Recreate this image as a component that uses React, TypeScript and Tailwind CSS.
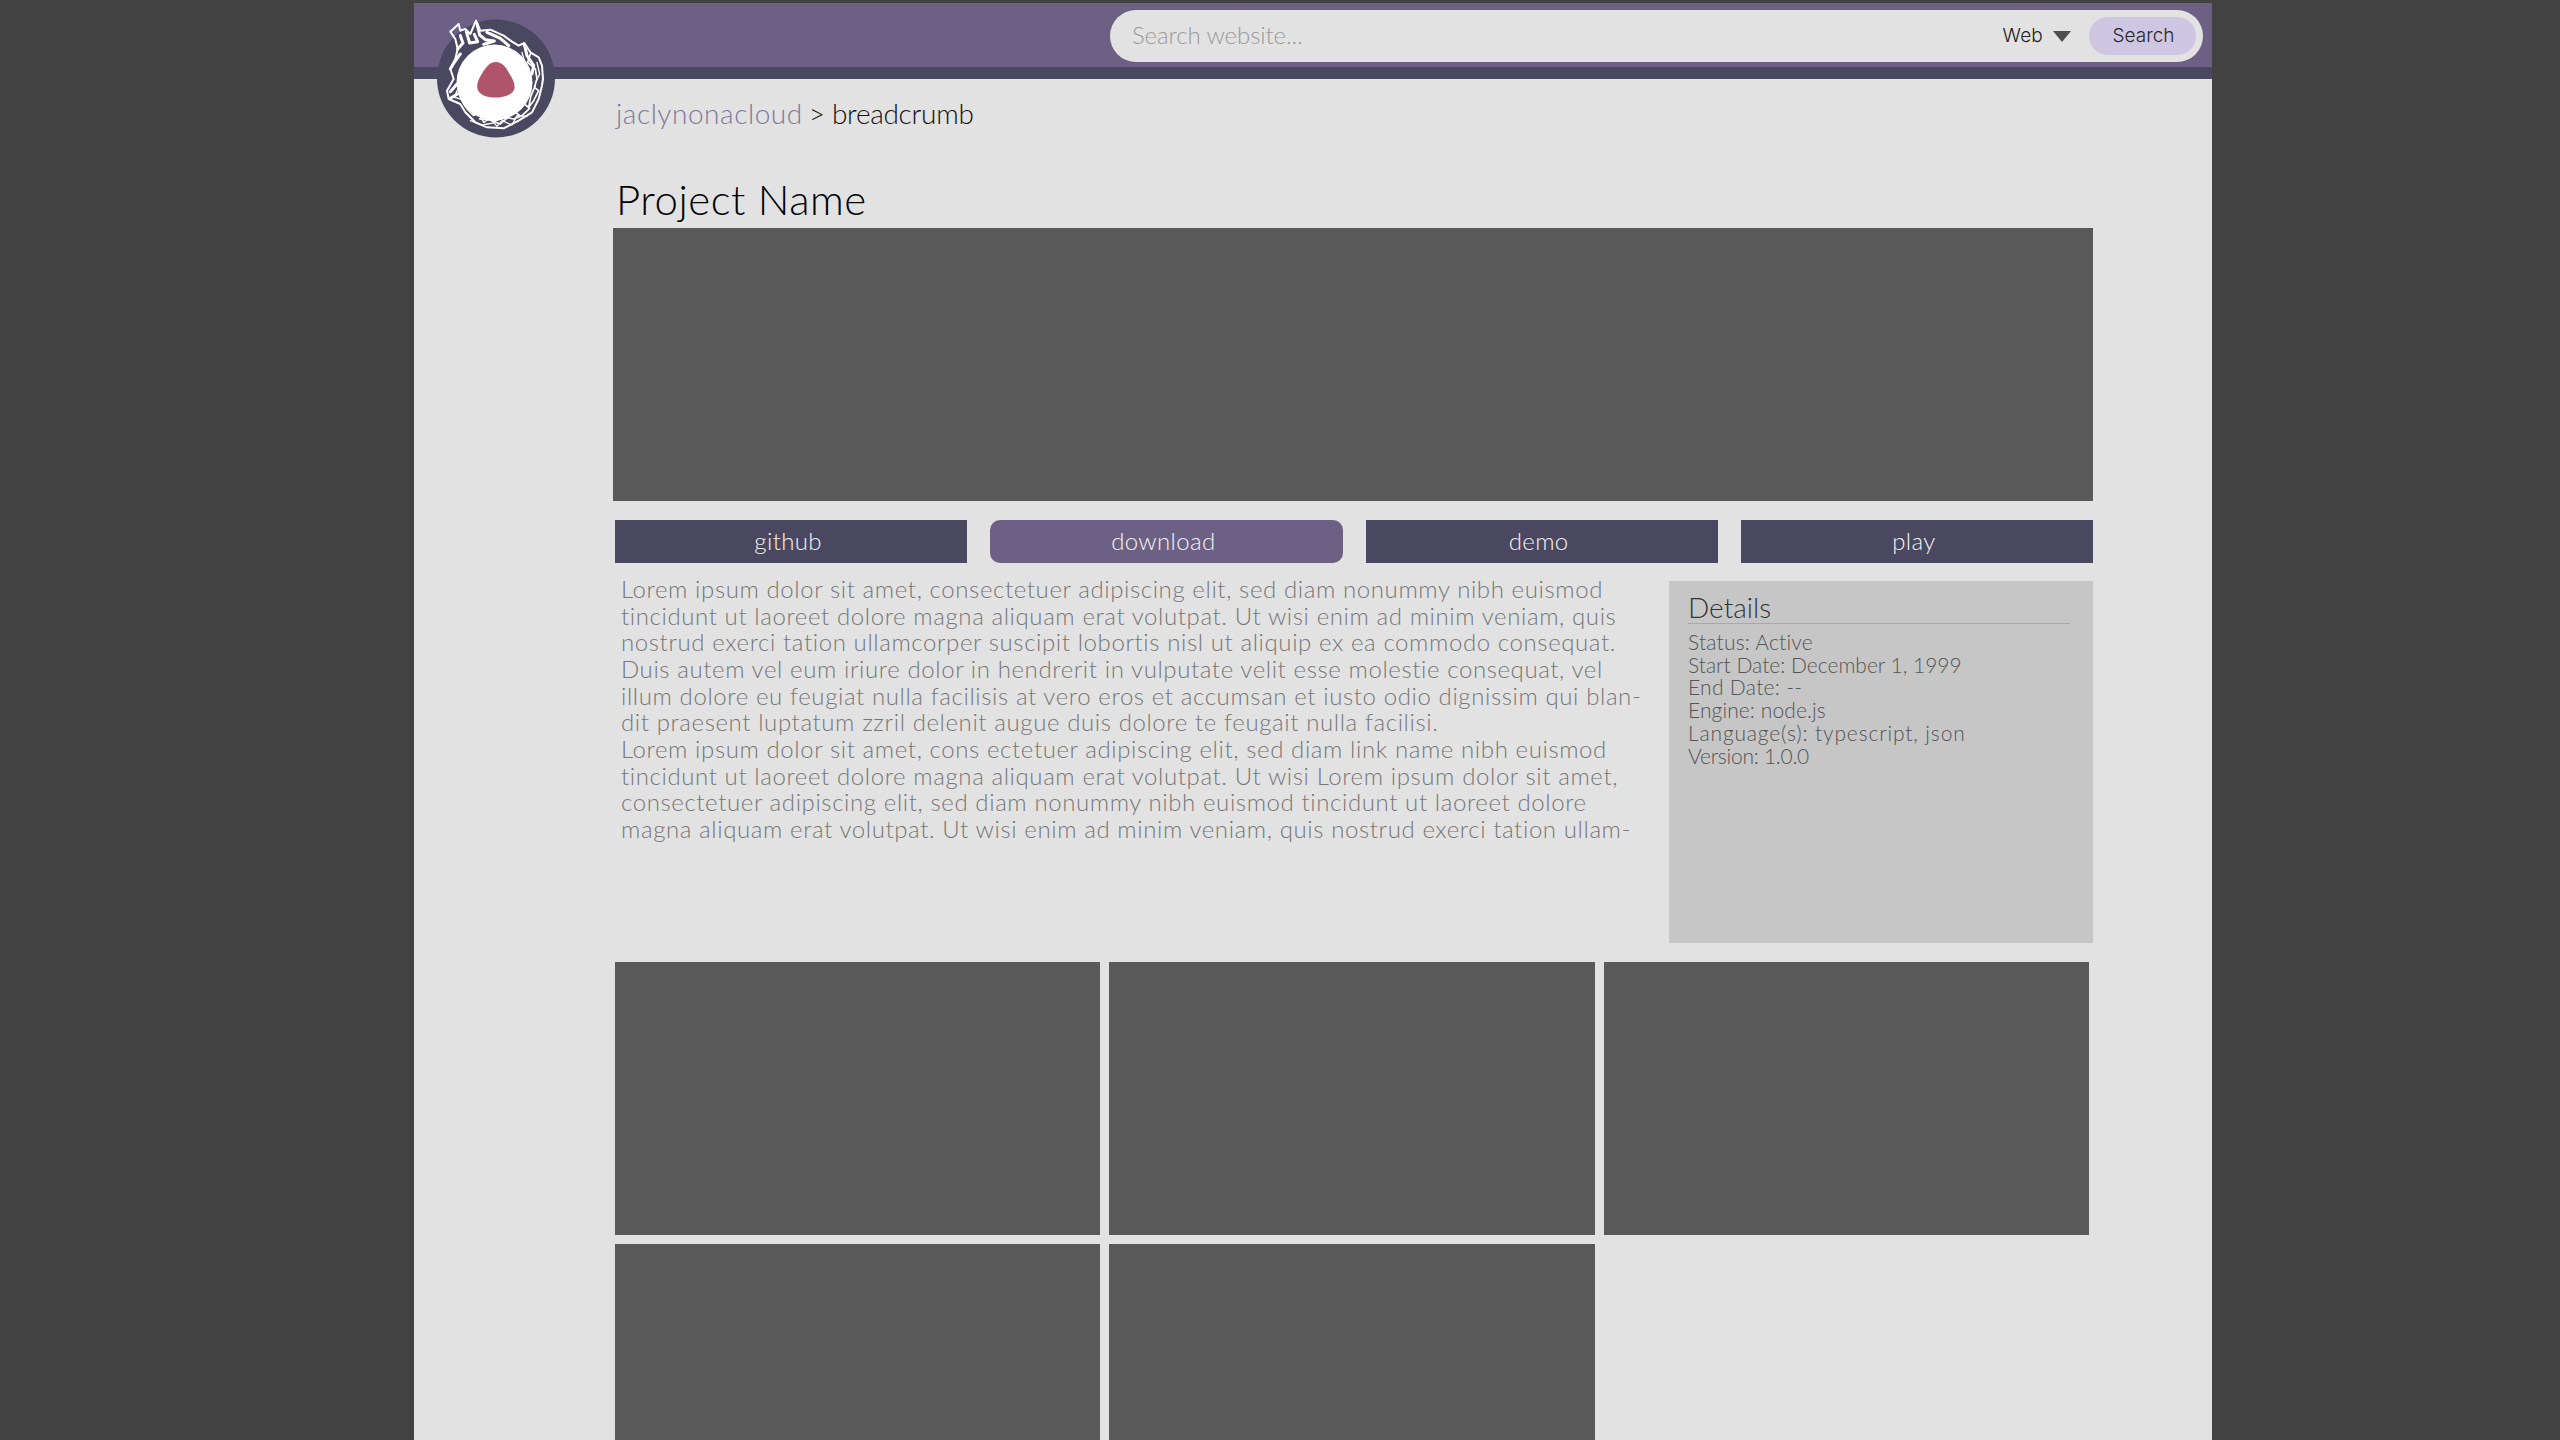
import React from "react";

const bodyLines = [
  "Lorem ipsum dolor sit amet, consectetuer adipiscing elit, sed diam nonummy nibh euismod",
  "tincidunt ut laoreet dolore magna aliquam erat volutpat. Ut wisi enim ad minim veniam, quis",
  "nostrud exerci tation ullamcorper suscipit lobortis nisl ut aliquip ex ea commodo consequat.",
  "Duis autem vel eum iriure dolor in hendrerit in vulputate velit esse molestie consequat, vel",
  "illum dolore eu feugiat nulla facilisis at vero eros et accumsan et iusto odio dignissim qui blan-",
  "dit praesent luptatum zzril delenit augue duis dolore te feugait nulla facilisi.",
  "Lorem ipsum dolor sit amet, cons ectetuer adipiscing elit, sed diam link name nibh euismod",
  "tincidunt ut laoreet dolore magna aliquam erat volutpat. Ut wisi Lorem ipsum dolor sit amet,",
  "consectetuer adipiscing elit, sed diam nonummy nibh euismod tincidunt ut laoreet dolore",
  "magna aliquam erat volutpat. Ut wisi enim ad minim veniam, quis nostrud exerci tation ullam-",
];

const details = [
  { text: "Status: Active", cls: "tracking-[0.2px]" },
  { text: "Start Date: December 1, 1999", cls: "" },
  { text: "End Date: --", cls: "tracking-[0.3px]" },
  { text: "Engine: node.js", cls: "tracking-[0.1px]" },
  { text: "Language(s): typescript, json", cls: "tracking-[0.85px]" },
  { text: "Version: 1.0.0", cls: "tracking-[-0.25px]" },
];

function Logo() {
  return (
    <svg viewBox="0 0 118 119" className="absolute left-[23px] top-[16px] h-[119px] w-[118px]">
      <circle cx="59" cy="59.5" r="59" fill="#4a4861" />
      <circle cx="57.5" cy="63.5" r="38" fill="#ffffff" />
      <path d="M59 43 C65 43 69 48 72 54 C76 60 79 66 77 71 C74 77 65 78.5 58 78.5 C50 78.5 42 76 40.5 70 C39 64 43 58 46 53 C50 47 53 43 59 43 Z" fill="#b0546c" />
      <g transform="scale(0.3333)" fill="none" stroke="#ffffff" strokeLinejoin="round" strokeLinecap="round">
        <path strokeWidth="6" d="M40 38 L65 15 L70 35 L85 30 L100 45 L117 5 L130 35 L160 32 L200 50 L225 68 L245 80 L262 72 L280 100 L305 115 L315 140 L318 180 L315 200 L305 240 L285 280 L245 305 L200 328 L150 325 L115 310 L85 280 L70 255 L35 240 L30 215 L50 180 L40 150 L55 120 L62 90 L55 60 L40 38" />
        <path strokeWidth="9" d="M62 90 L78 72 L70 50 M88 38 L98 72 L122 68 L112 46 M120 14 L128 48 L145 62 L172 66 L140 76 M150 40 L190 58 L215 80 M262 76 L270 110 L290 140 L285 165 M40 150 L52 130 L70 105 M40 218 L60 195 M40 238 L62 225" />
        <path strokeWidth="5" d="M280 105 L272 130 L295 150 L300 180 L292 205 L305 215 L290 245 L275 265 L282 230 L295 200 M248 290 L225 270 L262 255 L278 268 L255 290 L230 300 L212 296 L190 315 L150 300 L122 280 L108 285 L150 285 L128 300 L175 305 L210 295" />
        <path strokeWidth="4" d="M90 270 L110 290 L125 282 L140 310 L160 298 L180 322 L195 305 L225 318 L240 290 L270 292 M60 215 L52 235 L72 240 L84 262 L100 280 M300 130 L308 165 L296 190 M255 100 L262 125 M100 305 L135 318 L168 312" />
      </g>
    </svg>
  );
}

function ActionButton({ label, active }: { label: string; active?: boolean }) {
  return (
    <div
      className={
        active
          ? "flex h-[43px] items-center justify-center rounded-[10px] bg-[#6c6185] pb-[2px] pr-[6px] text-[24px] font-light tracking-[0.35px] text-[#f2f2f2]"
          : "flex h-[43px] items-center justify-center bg-[#4a4861] pb-[2px] pr-[6px] text-[24px] font-light tracking-[0.35px] text-[#f2f2f2]"
      }
    >
      {label}
    </div>
  );
}

export default function App() {
  return (
    <div className="h-screen overflow-hidden bg-[#424242] pt-[3px] font-['Lato','Liberation_Sans',sans-serif]">
      <div className="relative ml-[414px] h-[1437px] w-[1798px] overflow-hidden bg-[#e2e2e2]">
        <header className="border-b-[12px] border-[#4a4861] bg-[#6c6185]">
          <div className="flex h-[64px] justify-end pr-[9px] pt-[7px]">
            <div className="flex h-[52px] w-[1093px] items-center rounded-full bg-[#e2e2e2] pl-[22px] pr-[7px] font-['Inter',sans-serif]">
              <span className="flex-1 pb-[2px] font-['Lato',sans-serif] text-[24px] font-light tracking-[-0.1px] text-[#9a9a9a]">Search website...</span>
              <span className="text-[19px] font-light tracking-[0.2px] text-[#222222]">Web</span>
              <svg viewBox="0 0 18 11" className="ml-[10px] mr-[18px] h-[11px] w-[18px]">
                <path d="M0 0 H18 L9 11 Z" fill="#4f4f4f" />
              </svg>
              <div className="flex h-[38px] w-[107px] items-center justify-center rounded-full bg-[#cfc6e3] pl-[2px] text-[19px] font-light text-[#2a2a2a]">Search</div>
            </div>
          </div>
        </header>
        <Logo />
        <main className="pl-[199px]">
          <div className="flex h-[70px] items-center pb-[3px] pl-[3px] text-[28px] font-light tracking-[0.55px]">
            <span className="text-[#7d7a9c]">jaclynonacloud</span>
            <span className="ml-[6px] tracking-[-0.3px] text-[#111111]">&gt; breadcrumb</span>
          </div>
          <h1 className="flex h-[79px] items-end pb-[8px] pl-[3px] text-[42px] font-light leading-none tracking-[0.5px] text-[#000000]">Project Name</h1>
          <div className="h-[273px] w-[1480px] bg-[#595959]" />
          <div className="mt-[19px] grid w-[1478px] translate-x-[2px] grid-cols-4 gap-x-[23px]">
            <ActionButton label="github" />
            <ActionButton label="download" active />
            <ActionButton label="demo" />
            <ActionButton label="play" />
          </div>
          <section className="mt-[18px] flex h-[362px] w-[1480px]">
            <div className="-mt-[5px] w-[1056px] whitespace-nowrap pl-[8px] text-[24px] font-light leading-[26.67px] tracking-[0.6px] text-[#777777]">
              {bodyLines.map((line) => (
                <div key={line}>{line}</div>
              ))}
            </div>
            <aside className="h-[362px] w-[424px] bg-[#c6c6c6] pl-[19px] pr-[23px] pt-[10px]">
              <h2 className="border-b border-[#a8a8a8] text-[28px] font-light leading-[32px] text-[#333333]">Details</h2>
              <div className="mt-[7px] text-[21px] font-light leading-[22.7px] text-[#555555]">
                {details.map((line) => (
                  <div key={line.text} className={line.cls}>{line.text}</div>
                ))}
              </div>
            </aside>
          </section>
          <div className="mt-[19px] grid w-[1474px] translate-x-[2px] grid-cols-3 gap-[9px]">
            <div className="h-[273px] bg-[#595959]" />
            <div className="h-[273px] bg-[#595959]" />
            <div className="h-[273px] bg-[#595959]" />
            <div className="h-[273px] bg-[#595959]" />
            <div className="h-[273px] bg-[#595959]" />
          </div>
        </main>
      </div>
    </div>
  );
}
